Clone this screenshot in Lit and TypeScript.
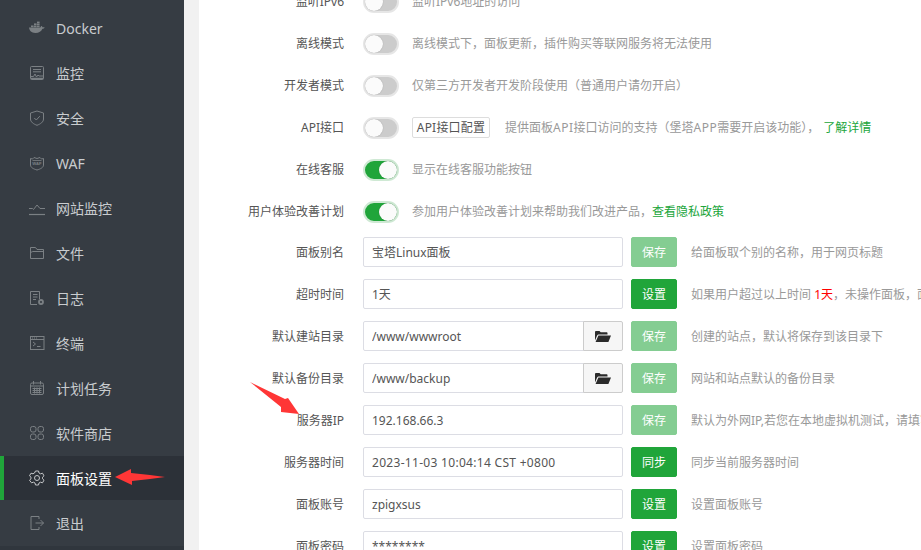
import { LitElement, html, css, svg } from "lit";
import { customElement } from "lit/decorators.js";

const I = (body: unknown) => html`<svg class="ico" viewBox="0 0 16 16" fill="none" stroke="currentColor" stroke-width="1">${body}</svg>`;

const icons: Record<string, unknown> = {
  docker: html`<svg class="ico" viewBox="0 0 16 16" fill="currentColor"><path d="M0 7.6h11.4c.2-1 .9-1.7 1.2-1.6.5.3.8.9.8 1.3.7-.3 1.6-.2 2.3.2-.5 1-1.3 1.3-2.3 1.3C12.500 11.400 10 13 6.300 13 2.500 13 .5 11 0 7.600z"/><rect x="2" y="5.500" width="2.600" height="1.700"/><rect x="5" y="5.500" width="2.600" height="1.700"/><rect x="8" y="5.500" width="2.600" height="1.700"/><rect x="5" y="3.400" width="2.600" height="1.700"/><rect x="8" y="3.400" width="2.600" height="1.700"/><rect x="8" y="1.600" width="2.600" height="1.500"/></svg>`,
  monitor: I(svg`<rect x="1.500" y="1.500" width="13" height="13" rx="1"/><path d="M4 4.500h8M4 6.800h8"/><path d="M1.500 11.500h3l1.500-2.500 1.500 3 1.500-2 1 1h4.500"/><path d="M2 13.500h12" stroke-width="1.500"/>`),
  shield: I(svg`<path d="M8 1l6.500 2v6c0 3-3 5-6.500 6.300C4.500 14 1.500 12 1.500 9V3z"/><path d="M5.300 8l2 2 3.500-3.800"/>`),
  waf: html`<svg class="ico" viewBox="0 0 16 16" fill="none" stroke="currentColor"><path d="M1.500 3.500l2 .5L5 2.500l3 1 3-1 1.500 1.500 2-.5V10c0 2.500-3 4-6.500 5C4.500 14 1.500 12.500 1.500 10z"/><path d="M3.500 5.500h9" stroke-width=".8"/><text x="8" y="10" text-anchor="middle" font-size="4.200" font-weight="700" fill="currentColor" stroke="none" font-family="Liberation Sans, sans-serif">WAF</text></svg>`,
  line: I(svg`<path d="M0 8.500h3.500l1 1L8 5l3 3.500h5"/><path d="M0 14.500h16" stroke-width="1.200"/>`),
  folder: I(svg`<path d="M1.500 13.500V2.500h5l1.500 2h6.500v9zM1.500 7.500l2.300-1h10.700"/>`),
  log: html`<svg class="ico" viewBox="0 0 16 16" fill="none" stroke="currentColor"><path d="M10.500 9V1.500h-9v13h6.500"/><path d="M4 4.500h4.500M4 7h4.500M4 9.500h3"/><circle cx="12" cy="12" r="2" stroke-width="1.800"/></svg>`,
  term: I(svg`<rect x="1.500" y="1.500" width="13.500" height="13"/><path d="M1.500 4.500h13.500"/><path d="M3 3h1M5 3h1M7 3h1"/><path d="M4 7l2.500 2L4 11M8 11.500h3.500"/>`),
  cal: I(svg`<rect x="1.500" y="3" width="13" height="11.500" rx="1.500"/><path d="M4.500 1v3.500M11.500 1v3.500M1.500 6h13"/><path d="M3.500 8.500h9M3.500 10.500h9M3.500 12.500h9M5.500 7.500v6M8 7.500v6M10.500 7.500v6"/>`),
  apps: I(svg`<rect x="1.500" y="1.500" width="5.500" height="5.500" rx="2"/><rect x="9" y="1.500" width="5.500" height="5.500" rx="2"/><rect x="1.500" y="9" width="5.500" height="5.500" rx="2"/><rect x="9" y="9" width="5.500" height="5.500" rx="2"/>`),
  gear: I(svg`<path d="M6.500 1h3l.5 2 1.500.8 2-.6 1.500 2.600-1.500 1.400v1.600l1.500 1.400-1.500 2.600-2-.6-1.500.8-.5 2h-3l-.5-2-1.500-.8-2 .6L.5 10.200 2 8.800V7.200L.5 5.800 2 3.200l2 .6L5.500 3z"/><circle cx="8" cy="8" r="2.500"/>`),
  exit: I(svg`<path d="M10 1.500H2v13h8V12"/><path d="M10 4v-2.500M6.500 8h8M11.500 5l3 3-3 3"/>`),
};

const nav: [string, string][] = [
  ["docker", "Docker"], ["monitor", "监控"], ["shield", "安全"], ["waf", "WAF"],
  ["line", "网站监控"], ["folder", "文件"], ["log", "日志"], ["term", "终端"],
  ["cal", "计划任务"], ["apps", "软件商店"], ["gear", "面板设置"], ["exit", "退出"],
];

const folderBtn = html`<button class="pick"><svg viewBox="0 0 16 11" width="16" height="11"><path fill="#2b2b2b" d="M0 1.200C0 .5.500 0 1 0h3.500l1.200 1.300h5.800c.6 0 1 .4 1 1V3.500H4C3 3.500 2.400 4 2 4.800L0 9.500z"/><path fill="#2b2b2b" d="M3.400 4.500H16l-2.600 6.500H.6z"/></svg></button>`;

type Row =
  | { k: "sw"; label: string; on: boolean; desc: unknown; extra?: string }
  | { k: "in"; label: string; value: string; btn: string; off?: boolean; pick?: boolean; wide?: boolean; desc: unknown };

const rows: Row[] = [
  { k: "sw", label: "监听IPv6", on: false, desc: "监听IPv6地址的访问" },
  { k: "sw", label: "离线模式", on: false, desc: "离线模式下，面板更新，插件购买等联网服务将无法使用" },
  { k: "sw", label: "开发者模式", on: false, desc: "仅第三方开发者开发阶段使用（普通用户请勿开启）" },
  { k: "sw", label: "API接口", on: false, extra: "API接口配置", desc: html`提供面板<i>API</i>接口访问的支持（堡塔<i>APP</i>需要开启该功能），<a class="gap">了解详情</a>` },
  { k: "sw", label: "在线客服", on: true, desc: "显示在线客服功能按钮" },
  { k: "sw", label: "用户体验改善计划", on: true, desc: html`参加用户体验改善计划来帮助我们改进产品，<a>查看隐私政策</a>` },
  { k: "in", label: "面板别名", value: "宝塔Linux面板", btn: "保存", off: true, desc: "给面板取个别的名称，用于网页标题" },
  { k: "in", label: "超时时间", value: "1天", btn: "设置", desc: html`如果用户超过以上时间 <b>1天</b>，未操作面板，面板将自动退出登录` },
  { k: "in", label: "默认建站目录", value: "/www/wwwroot", btn: "保存", off: true, pick: true, desc: "创建的站点，默认将保存到该目录下" },
  { k: "in", label: "默认备份目录", value: "/www/backup", btn: "保存", off: true, pick: true, desc: "网站和站点默认的备份目录" },
  { k: "in", label: "服务器IP", value: "192.168.66.3", btn: "保存", off: true, desc: "默认为外网IP,若您在本地虚拟机测试，请填写虚拟机IP" },
  { k: "in", label: "服务器时间", value: "2023-11-03 10:04:14 CST +0800", wide: true, btn: "同步", desc: "同步当前服务器时间" },
  { k: "in", label: "面板账号", value: "zpigxsus", btn: "设置", desc: "设置面板账号" },
  { k: "in", label: "面板密码", value: "********", btn: "设置", desc: "设置面板密码" },
];

@customElement("app-root")
export class AppRoot extends LitElement {
  static styles = css`
    :host { display: block; width: 921px; height: 550px; overflow: hidden; position: relative;
      font-family: "Noto Sans", "Noto Sans CJK SC", sans-serif; font-size: 12px; color: #555; background: #fff; }
    .page { display: flex; height: 550px; }
    .side { width: 184px; flex: none; background: #363c43; display: flex; flex-direction: column; gap: 1px; padding-top: 6px; box-sizing: border-box; }
    .item { height: 44px; flex: none; display: flex; align-items: center; gap: 11px; padding-left: 29px; color: #c9cccf; font-size: 14px; box-sizing: border-box; }
    .item .ico { width: 16px; height: 16px; color: #7b8084; flex: none; }
    .item.active { background: #2c3138; color: #fff; border-left: 4px solid #20a53a; padding-left: 25px; }
    .item.active .ico { color: #c4c6c8; }
    .rest { flex: 1; background: #30363d; }
    .gutter { width: 15px; flex: none; background: #f1f1f1; }
    .main { flex: 1; min-width: 0; overflow: hidden; }
    .rows { margin-top: -20px; }
    .row { height: 42px; display: flex; align-items: center; white-space: nowrap; }
    .row:not(.in) + .row.in { margin-top: -1px; }
    .label { width: 145px; flex: none; text-align: right; color: #555; margin-right: 19px; }
    .sw { width: 36px; height: 22px; flex: none; box-sizing: border-box; border-radius: 11px; background: #ccc; border: 2px solid #e6e6e6; position: relative; margin-top: 2px; }
    .sw::after { content: ""; position: absolute; left: 0; top: 0; width: 18px; height: 18px; background: #fbfbfb; border-radius: 50%; box-shadow: 0 0 1px rgba(0,0,0,.3); }
    .sw.on { background: #20a53a; border-color: #cfe9d4; }
    .sw.on::after { left: 14px; }
    .cfg { margin-left: 13px; width: 78px; height: 21px; box-sizing: border-box; border: 1px solid #ddd; border-radius: 2px; background: #fff; color: #555; font: inherit; letter-spacing: .2px; padding: 0; flex: none; }
    .desc { color: #999; margin-left: 13px; }
    .cfg + .desc { margin-left: 15px; }
    .desc a { color: #20a53a; }
    .desc a.gap { margin-left: 4px; }
    .desc i { font-style: normal; letter-spacing: .5px; }
    .desc b { color: #f00; font-weight: 400; }
    .group { width: 260px; height: 30px; flex: none; display: flex; }
    input { flex: 1; min-width: 0; box-sizing: border-box; height: 30px; border: 1px solid #dcdde4; border-radius: 2px; padding: 0 8px; font: inherit; color: #555; background: #fff; outline: none; }
    input.wide { letter-spacing: .3px; }
    .pick { width: 40px; flex: none; height: 30px; box-sizing: border-box; background: #f6f6f6; border: 1px solid #ccc; border-radius: 0 2px 2px 0; margin-left: -1px; padding: 0; display: flex; align-items: center; justify-content: center; }
    .group.has-pick input { border-radius: 2px 0 0 2px; }
    .btn { width: 46px; height: 30px; flex: none; margin-left: 8px; box-sizing: border-box; border: 1px solid #20a53a; background: #20a53a; color: #fff; border-radius: 2px; font: inherit; padding: 0; }
    .btn.off { opacity: .55; }
    .row.in .desc { margin-left: 14px; }
    .marks { position: absolute; left: 0; top: 0; width: 921px; height: 550px; pointer-events: none; }
  `;

  render() {
    return html`<div class="page">
      <aside class="side">
        ${nav.map(([i, t]) => html`<div class="item ${t === "面板设置" ? "active" : ""}">${icons[i]}<span>${t}</span></div>`)}
        <div class="rest"></div>
      </aside>
      <div class="gutter"></div>
      <main class="main"><div class="rows">
        ${rows.map((r) =>
          r.k === "sw"
            ? html`<div class="row"><div class="label">${r.label}</div><div class="sw ${r.on ? "on" : ""}"></div>${r.extra ? html`<button class="cfg">${r.extra}</button>` : ""}<div class="desc">${r.desc}</div></div>`
            : html`<div class="row in"><div class="label">${r.label}</div><div class="group ${r.pick ? "has-pick" : ""}"><input class="${r.wide ? "wide" : ""}" .value=${r.value} readonly />${r.pick ? folderBtn : ""}</div><button class="btn ${r.off ? "off" : ""}">${r.btn}</button><div class="desc">${r.desc}</div></div>`
        )}
      </div></main>
    </div>
    <svg class="marks" viewBox="0 0 921 550">
      <polygon fill="#ff3636" points="115,477 131,469 131,473 150,475 165,477 150,479 132,481 132,485" />
      <polygon fill="#ff3636" points="250,382 285,399 288,398 299,414 281,412 281,407" />
    </svg>`;
  }
}
